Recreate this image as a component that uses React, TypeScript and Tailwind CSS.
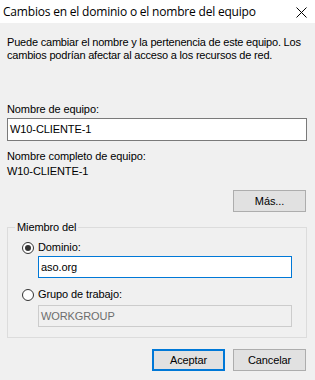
const body = "font-['Liberation_Sans',Arial,sans-serif] text-[11px] leading-[13px] tracking-[-0.1px] text-black";

function Radio({ checked, label }: { checked?: boolean; label: string }) {
  return (
    <div className="flex items-center gap-[4px] pl-[14px]">
      <span className="flex h-[12px] w-[12px] items-center justify-center rounded-full border border-[#333333] bg-white">
        {checked && <span className="h-[6px] w-[6px] rounded-full bg-[#333333]" />}
      </span>
      <span>{label}</span>
    </div>
  );
}

function Button({ label, focused }: { label: string; focused?: boolean }) {
  return (
    <button
      className={
        focused
          ? "h-[22px] w-[73px] border-2 border-[#0078d7] bg-[#e1e1e1]"
          : "h-[22px] w-[73px] border border-[#adadad] bg-[#e1e1e1]"
      }
    >
      {label}
    </button>
  );
}

export default function App() {
  return (
    <div className={`flex h-[380px] w-[315px] flex-col bg-[#f0f0f0] ${body}`}>
      {/* title bar */}
      <div className="flex h-[23px] items-center justify-between bg-white pl-[3px] pr-[8px]">
        <span className="font-['Open_Sans',sans-serif] text-[12px] tracking-[-0.2px] text-black">
          Cambios en el dominio o el nombre del equipo
        </span>
        <svg width="11" height="11" viewBox="0 0 11 11" className="mt-[2px]">
          <path d="M0.5 0.5L10.5 10.5M10.5 0.5L0.5 10.5" stroke="#000" strokeWidth="1" />
        </svg>
      </div>

      <div className="flex flex-col pl-[7px] pr-[8px] pt-[13px]">
        <p className="whitespace-nowrap tracking-[-0.2px]">
          Puede cambiar el nombre y la pertenencia de este equipo. Los
          <br />
          cambios podrían afectar al acceso a los recursos de red.
        </p>

        <label className="mt-[41px]">Nombre de equipo:</label>
        <div className="mt-[2px] flex h-[23px] items-center border border-[#7a7a7a] bg-white px-[2px]">
          W10-CLIENTE-1
        </div>

        <div className="mt-[9px]">Nombre completo de equipo:</div>
        <div className="mt-[2px]">W10-CLIENTE-1</div>

        <div className="mt-[12px] flex justify-end pr-[1px]">
          <Button label="Más..." />
        </div>

        <fieldset className="mt-[9px] h-[117px] border border-[#dcdcdc] p-0">
          <legend className="ml-[7px] px-[2px]">Miembro del</legend>
          <div className="mt-[7px]">
            <Radio checked label="Dominio:" />
          </div>
          <div className="ml-[30px] mr-[14px] mt-[2px] flex h-[22px] items-center border border-[#0078d7] bg-white px-[2px]">
            aso.org
          </div>
          <div className="mt-[10px]">
            <Radio label="Grupo de trabajo:" />
          </div>
          <div className="ml-[30px] mr-[14px] mt-[4px] flex h-[22px] items-center border border-[#cccccc] bg-[#f0f0f0] px-[2px] text-[#6d6d6d]">
            WORKGROUP
          </div>
        </fieldset>

        <div className="mt-[11px] flex justify-end gap-[8px] pr-[1px]">
          <Button label="Aceptar" focused />
          <Button label="Cancelar" />
        </div>
      </div>
    </div>
  );
}
